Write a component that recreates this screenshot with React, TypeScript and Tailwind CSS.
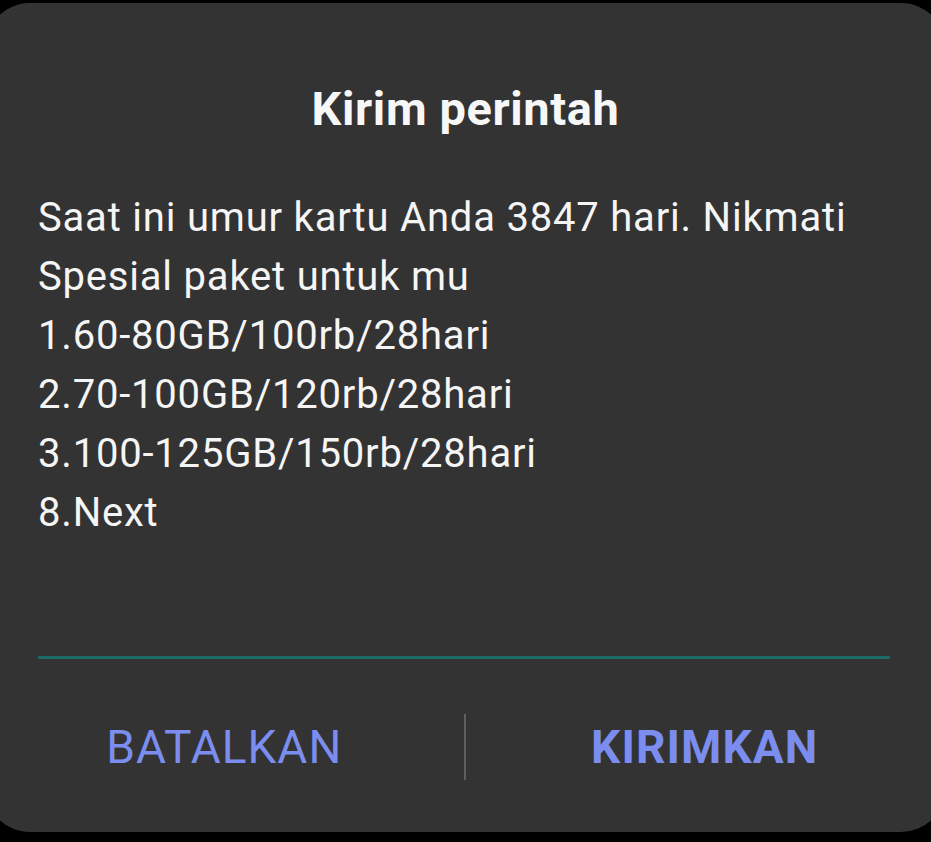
import React from "react";

const lines = [
  "Saat ini umur kartu Anda 3847 hari. Nikmati",
  "Spesial paket untuk mu",
  "1.60-80GB/100rb/28hari",
  "2.70-100GB/120rb/28hari",
  "3.100-125GB/150rb/28hari",
  "8.Next",
];

export default function App() {
  return (
    <div
      className="w-[931px] h-[842px] bg-black overflow-hidden relative"
      style={{ fontFamily: "Roboto, 'Liberation Sans', sans-serif" }}
    >
      <div className="ml-[-15px] mt-[3px] w-[961px] h-[829px] bg-[#333333] rounded-[45px] flex flex-col">
        <div className="pt-[78px] text-center text-[47px] leading-[56px] font-bold tracking-[0.6px] text-[#f7f7f7]">
          Kirim perintah
        </div>
        <div className="mt-[51px] pl-[53px] text-[40px] leading-[59px] tracking-[0.8px] text-[#f5f5f5]">
          {lines.map((l) => (
            <div key={l}>{l}</div>
          ))}
        </div>
        <div className="mt-[114px] ml-[53px] w-[852px] h-[3px] bg-[#1b6b68]" />
        <div className="mt-[53px] h-[70px] flex items-center">
          <div className="flex-1 text-center text-[46px] leading-[70px] tracking-[1px] text-[#7b8ef0] pr-[2px]">
            BATALKAN
          </div>
          <div className="w-[2px] h-[66px] bg-[#5e5e5e] ml-[-2px]" />
          <div className="flex-1 text-center text-[46px] leading-[70px] font-bold tracking-[1.1px] text-[#7b8ef0] pr-[2px]">
            KIRIMKAN
          </div>
        </div>
      </div>
    </div>
  );
}
